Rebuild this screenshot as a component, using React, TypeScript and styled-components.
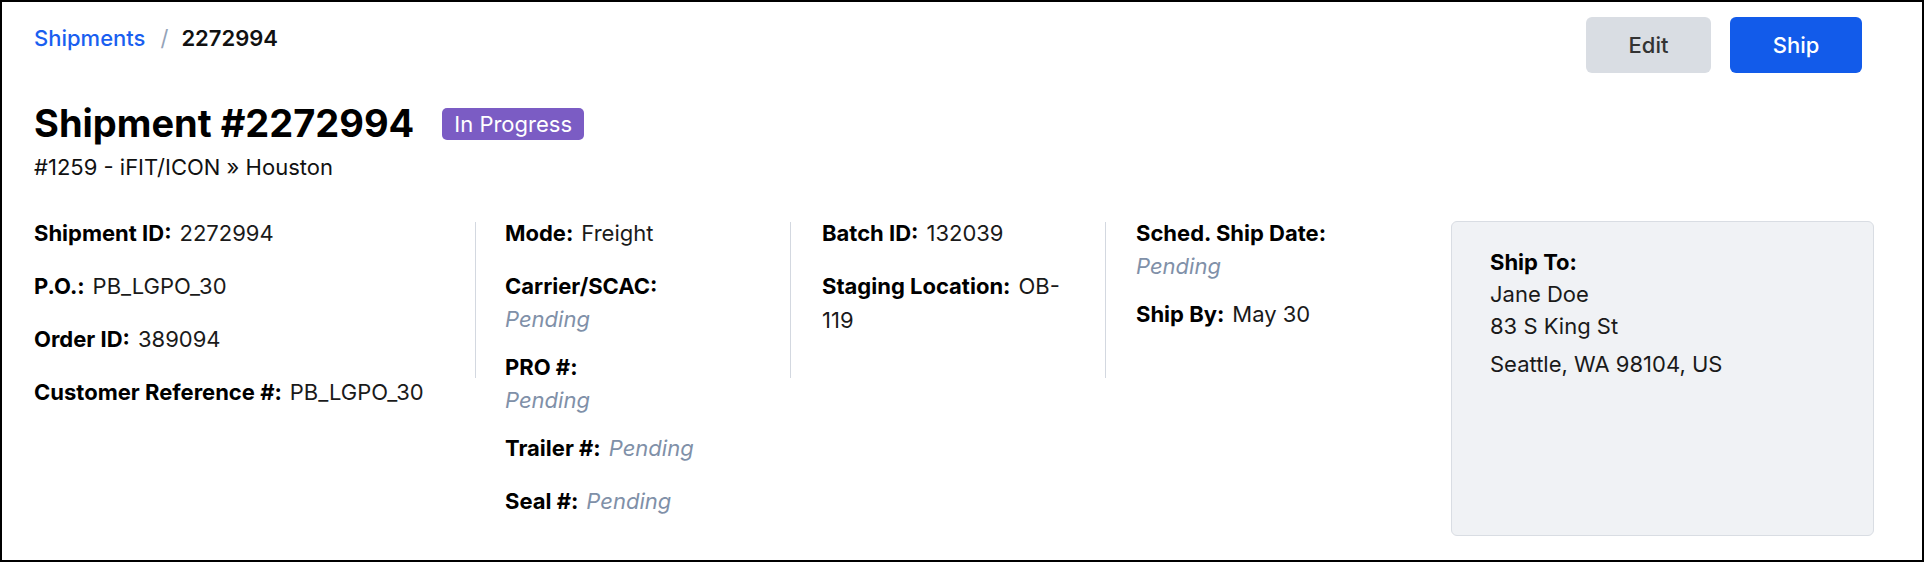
import styled, { createGlobalStyle } from 'styled-components';

const GlobalStyle = createGlobalStyle`
  html, body {
    margin: 0;
    padding: 0;
    background: #ffffff;
  }

  body {
    font-family: Inter, 'Noto Sans', 'Liberation Sans', sans-serif;
    color: #111111;
  }
`;

const Page = styled.div`
  box-sizing: border-box;
  width: 1924px;
  height: 562px;
  border: 2px solid #000000;
  padding: 15px 45px 0 32px;
  background: #ffffff;
`;

const Header = styled.div`
  display: flex;
  justify-content: space-between;
  align-items: flex-start;
  height: 56px;
  padding-right: 15px;
`;

const Breadcrumb = styled.nav`
  display: flex;
  align-items: center;
  gap: 15px;
  font-size: 22px;
  line-height: 42px;
`;

const CrumbLink = styled.a`
  color: #1a5ff0;
  font-weight: 500;
  text-decoration: none;
`;

const CrumbSep = styled.span`
  color: #94a3b8;
`;

const CrumbCurrent = styled.span`
  font-weight: 600;
  color: #111111;
  margin-left: -2px;
`;

const Actions = styled.div`
  display: flex;
  gap: 19px;
`;

const Button = styled.button<{ primary?: boolean }>`
  height: 56px;
  width: ${(props) => (props.primary ? '132px' : '125px')};
  border: none;
  border-radius: 6px;
  font-family: inherit;
  font-size: 22px;
  font-weight: 500;
  background: ${(props) => (props.primary ? '#125bea' : '#d9dde3')};
  color: ${(props) => (props.primary ? '#ffffff' : '#333333')};
  cursor: pointer;
`;

const TitleRow = styled.div`
  display: flex;
  align-items: center;
  gap: 28px;
  margin-top: 28px;
`;

const Title = styled.h1`
  margin: 0;
  font-size: 38px;
  line-height: 44px;
  font-weight: 700;
  color: #000000;
`;

const Badge = styled.span`
  display: inline-flex;
  align-items: center;
  height: 32px;
  padding: 0 12px;
  border-radius: 5px;
  background: #7b5cc4;
  color: #ffffff;
  font-size: 22px;
  margin-top: 2px;
`;

const Subtitle = styled.div`
  margin-top: 7px;
  font-size: 22px;
  line-height: 30px;
  color: #111111;
`;

const Details = styled.div`
  display: flex;
  align-items: flex-start;
  margin-top: 34px;
`;

const Column = styled.div<{ width: number; pad?: number }>`
  box-sizing: border-box;
  flex: 0 0 ${(props) => props.width}px;
  padding-left: ${(props) => props.pad ?? 0}px;
  padding-right: 24px;
  display: flex;
  flex-direction: column;
  gap: 19px;
`;

const Divider = styled.div`
  flex: 0 0 1px;
  height: 156px;
  margin-top: 6px;
  background: #d3d8e0;
`;

const Field = styled.div<{ stacked?: boolean }>`
  font-size: 22px;
  line-height: 34px;
  display: ${(props) => (props.stacked ? 'flex' : 'block')};
  flex-direction: column;
  align-items: flex-start;
`;

const Label = styled.span`
  font-weight: 700;
  color: #000000;
  margin-right: 8px;
`;

const Value = styled.span<{ pending?: boolean; stacked?: boolean }>`
  color: ${(props) => (props.pending ? '#8090a8' : '#1a1a1a')};
  font-style: ${(props) => (props.pending ? 'italic' : 'normal')};
  line-height: ${(props) => (props.stacked ? '23px' : 'inherit')};
  margin-top: ${(props) => (props.stacked ? '5px' : '0')};
`;

const ShipTo = styled.div`
  box-sizing: border-box;
  flex: 0 0 423px;
  height: 315px;
  margin-top: 5px;
  padding: 24px 38px;
  border: 1px solid #d9dde3;
  border-radius: 6px;
  background: #f0f2f5;
  font-size: 22px;
  line-height: 32px;
`;

const ShipToLabel = styled.div`
  font-weight: 700;
  color: #000000;
`;

const AddressLine = styled.div<{ spaced?: boolean }>`
  color: #1a1a1a;
  margin-top: ${(props) => (props.spaced ? '6px' : '0')};
`;

interface InfoProps {
  label: string;
  value: string;
  pending?: boolean;
  stacked?: boolean;
}

const Info = ({ label, value, pending, stacked }: InfoProps) => (
  <Field stacked={stacked}>
    <Label>{label}</Label>
    <Value pending={pending} stacked={stacked}>
      {value}
    </Value>
  </Field>
);

const App = () => (
  <>
    <GlobalStyle />
    <Page>
      <Header>
        <Breadcrumb>
          <CrumbLink href="#">Shipments</CrumbLink>
          <CrumbSep>/</CrumbSep>
          <CrumbCurrent>2272994</CrumbCurrent>
        </Breadcrumb>
        <Actions>
          <Button>Edit</Button>
          <Button primary>Ship</Button>
        </Actions>
      </Header>

      <TitleRow>
        <Title>Shipment #2272994</Title>
        <Badge>In Progress</Badge>
      </TitleRow>
      <Subtitle>#1259 - iFIT/ICON » Houston</Subtitle>

      <Details>
        <Column width={441}>
          <Info label="Shipment ID:" value="2272994" />
          <Info label="P.O.:" value="PB_LGPO_30" />
          <Info label="Order ID:" value="389094" />
          <Info label="Customer Reference #:" value="PB_LGPO_30" />
        </Column>
        <Divider />
        <Column width={314} pad={29}>
          <Info label="Mode:" value="Freight" />
          <Info label="Carrier/SCAC:" value="Pending" pending stacked />
          <Info label="PRO #:" value="Pending" pending stacked />
          <Info label="Trailer #:" value="Pending" pending />
          <Info label="Seal #:" value="Pending" pending />
        </Column>
        <Divider />
        <Column width={314} pad={31}>
          <Info label="Batch ID:" value="132039" />
          <Info label="Staging Location:" value="OB-119" />
        </Column>
        <Divider />
        <Column width={345} pad={30}>
          <Info label="Sched. Ship Date:" value="Pending" pending stacked />
          <Info label="Ship By:" value="May 30" />
        </Column>
        <ShipTo>
          <ShipToLabel>Ship To:</ShipToLabel>
          <AddressLine>Jane Doe</AddressLine>
          <AddressLine>83 S King St</AddressLine>
          <AddressLine spaced>Seattle, WA 98104, US</AddressLine>
        </ShipTo>
      </Details>
    </Page>
  </>
);

export default App;
